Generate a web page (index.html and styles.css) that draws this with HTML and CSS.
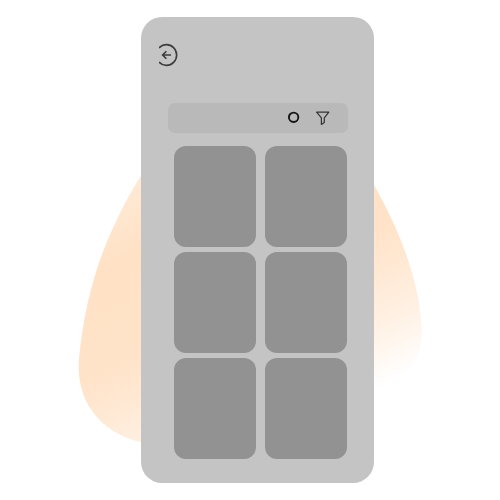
FILE: index.html
```html
<!DOCTYPE html>
<html lang="en">
<head>
<meta charset="utf-8">
<meta name="viewport" content="width=device-width, initial-scale=1">
<title>Catalogue</title>
<link rel="stylesheet" href="styles.css">
</head>
<body>
<main class="stage">
  <div class="scene">
    <svg class="blob" viewBox="78 150 344 300" aria-hidden="true">
      <defs>
        <linearGradient id="peach" gradientUnits="userSpaceOnUse" x1="141" y1="180" x2="276" y2="442">
          <stop offset="0" stop-color="#ffe9d5"/>
          <stop offset=".2" stop-color="#ffe2c6"/>
          <stop offset=".5" stop-color="#ffe3c8"/>
          <stop offset=".6" stop-color="#ffe6cf"/>
          <stop offset=".8" stop-color="#fff0e2"/>
          <stop offset="1" stop-color="#fff"/>
        </linearGradient>
      </defs>
      <path fill="url(#peach)" d="M160 150C141 172 122 205 106 244C90 284 83 320 79 358C75 403 103 434 141 442C220 450 300 430 374 392C407 377 420 367 422 330C420 285 402 234 374 185L350 150Z"/>
    </svg>
    <section class="phone">
      <header class="topbar">
        <button class="icon-button" type="button" aria-label="Back">
          <svg width="20" height="24" viewBox="0 0 20 24" fill="none" stroke="#3c3c3c" stroke-width="1.6" aria-hidden="true">
            <path d="M0 4.9A10.2 10.4 0 1 1 0 19.1"/>
            <path d="M12 12H3.6M7.4 8.2L3.6 12L7.4 15.8"/>
          </svg>
        </button>
      </header>
      <div class="search">
        <input class="search-input" type="text" aria-label="Search">
        <button class="icon-button" type="button" aria-label="Run search">
          <svg width="14" height="14" viewBox="0 0 14 14" fill="none" aria-hidden="true">
            <circle cx="7.6" cy="6.3" r="4.7" stroke="#151515" stroke-width="1.9"/>
          </svg>
        </button>
        <button class="icon-button" type="button" aria-label="Filter">
          <svg width="14" height="14" viewBox="0 0 14 14" fill="none" stroke="#333" stroke-width="1.2" stroke-linejoin="round" aria-hidden="true">
            <path d="M.6 1.1H12.8L8.3 6.8V11.6L5.4 13.4V6.8Z"/>
          </svg>
        </button>
      </div>
      <div class="cards">
        <article class="card"></article>
        <article class="card"></article>
        <article class="card"></article>
        <article class="card"></article>
        <article class="card"></article>
        <article class="card"></article>
      </div>
    </section>
  </div>
</main>
</body>
</html>
```
FILE: styles.css
```css
* {
  box-sizing: border-box;
}

body {
  margin: 0;
  background: #fff;
  font-family: "Liberation Sans", sans-serif;
}

.stage {
  display: flex;
  justify-content: center;
  min-height: 100vh;
  padding: 17px 78px;
}

.scene {
  position: relative;
  display: flex;
  width: 100%;
  max-width: 344px;
  padding: 0 48px 0 63px;
}

/* Decorative shape behind the phone */
.blob {
  position: absolute;
  top: 133px;
  left: 0;
  width: 100%;
}

.phone {
  position: relative;
  flex: 1;
  min-width: 0;
  padding: 26px 26px 24px 18px;
  border-radius: 21px;
  background: #c4c4c4;
}

.topbar {
  display: flex;
  margin-bottom: 36px;
}

.icon-button {
  display: flex;
  padding: 0;
  border: 0;
  background: none;
}

.search {
  display: flex;
  align-items: center;
  gap: 16px;
  margin: 0 0 13px 9px;
  padding: 0 18px 0 8px;
  border-radius: 7px;
  background: #b9b9b9;
}

.search-input {
  flex: 1;
  min-width: 0;
  height: 30px;
  padding: 0;
  border: 0;
  outline: 0;
  background: none;
}

.cards {
  display: grid;
  grid-template-columns: 1fr 1fr;
  gap: 5px 9px;
  padding: 0 1px 0 15px;
}

.card {
  height: 101px;
  border-radius: 12px;
  background: #929292;
}
```
